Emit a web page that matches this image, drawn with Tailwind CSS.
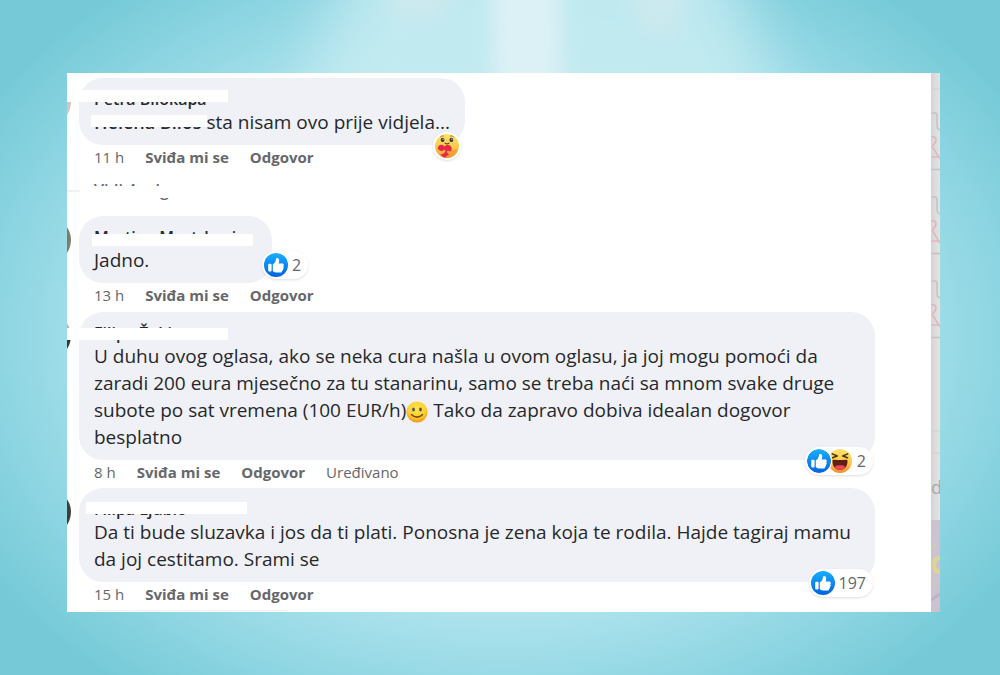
<!DOCTYPE html>
<html lang="hr">
<head>
  <meta charset="UTF-8">
  <meta name="viewport" content="width=device-width, initial-scale=1.0">
  <title>Komentari</title>
  <script src="https://cdn.jsdelivr.net/npm/@tailwindcss/browser@4"></script>
</head>
<body class="relative min-h-screen overflow-x-hidden bg-[#76cad8] bg-[radial-gradient(ellipse_60%_66%_at_50%_50%,#b8e8f0_0%,#b0e4ee_60%,#98dae6_76%,#76cad8_100%)] font-['Open_Sans','Noto_Sans',sans-serif] text-[#26282c]">

  <!-- shared reaction icons -->
  <svg class="absolute size-0" aria-hidden="true">
    <defs>
      <linearGradient id="blue" x1="0" y1="0" x2="0" y2="1">
        <stop offset="0" stop-color="#18afff"/><stop offset="1" stop-color="#0062e0"/>
      </linearGradient>
      <linearGradient id="yellow" x1="0" y1="0" x2="0" y2="1">
        <stop offset="0" stop-color="#ffe368"/><stop offset=".6" stop-color="#fdc848"/><stop offset="1" stop-color="#f28a2d"/>
      </linearGradient>
      <radialGradient id="face" cx=".5" cy=".35" r=".65">
        <stop offset="0" stop-color="#ffe34d"/><stop offset=".65" stop-color="#ffcf2f"/><stop offset="1" stop-color="#f59018"/>
      </radialGradient>
      <symbol id="like" viewBox="0 0 24 24">
        <circle cx="12" cy="12" r="12" fill="url(#blue)"/>
        <rect x="4.2" y="10.8" width="3.4" height="7.6" rx=".9" fill="#fff"/>
        <path d="M8.8 11.6c1.700-1.200 3-2.800 3.100-5 0-1 .5-1.500 1.300-1.500 1.400 0 2 1.300 2 2.600 0 1-.3 1.900-.6 2.700h3.500c1 0 1.700.7 1.700 1.500 0 .6-.3 1.100-.7 1.300.5.300.7.700.7 1.200 0 .7-.4 1.200-1 1.400.2.300.3.500.3.800 0 .7-.5 1.200-1.200 1.300.1.200.1.300.1.500 0 .7-.6 1.100-1.500 1.100h-3.200c-1.800 0-3.200-.3-4.500-1.200z" fill="#fff"/>
      </symbol>
      <symbol id="haha" viewBox="0 0 24 24">
        <circle cx="12" cy="12" r="12" fill="url(#yellow)"/>
        <path d="M4.500 12.200c0-1 .6-1.500 1.700-1.400 3.900.4 7.700.4 11.600 0 1.100-.1 1.700.4 1.700 1.400 0 5-3 8.600-7.500 8.600s-7.500-3.600-7.500-8.600z" fill="#5e2113"/>
        <path d="M6.600 18c1.500-1.700 3.300-2 5.400-1.600 2.100-.4 3.900-.1 5.400 1.600-1.300 1.800-3.200 2.800-5.400 2.800S7.900 19.800 6.600 18z" fill="#f0445c"/>
        <path d="M4.300 4.900l5 2.100-4.800 1.800M19.700 4.900l-5 2.100 4.800 1.800" fill="none" stroke="#4a3418" stroke-width="1.500" stroke-linecap="round" stroke-linejoin="round"/>
      </symbol>
      <symbol id="care" viewBox="0 0 24 24">
        <circle cx="12" cy="12" r="12" fill="url(#yellow)"/>
        <path d="M5.300 2.900c.9-.9 2-1.200 3.300-.9M18.700 2.900c-.9-.9-2-1.200-3.300-.9" fill="none" stroke="#b9711c" stroke-width=".9" stroke-linecap="round"/>
        <ellipse cx="7.600" cy="5.900" rx="1.900" ry="2.100" fill="#2c3340"/><ellipse cx="16.400" cy="5.900" rx="1.900" ry="2.100" fill="#2c3340"/>
        <circle cx="8.100" cy="5.200" r=".6" fill="#fff"/><circle cx="16.900" cy="5.200" r=".6" fill="#fff"/>
        <path d="M10 9.100c1.200.9 2.800.9 4 0" fill="none" stroke="#5b3a1a" stroke-width="1.100" stroke-linecap="round"/>
        <path d="M9.500 23.800c-4-2.800-6.600-5.600-6.700-9.100-.1-3.900 4.600-5.200 6.700-2.100 2.800-3.100 7.700-1.100 7.200 2.700-.5 3.500-3.600 6-7.200 8.500z" fill="#e5294a"/>
        <path d="M.8 14.800c1.400-.3 2.800.4 4.200 1.600 1 .9 2.500.7 3.500-.2 1.200-1 2.600.3 1.700 1.700-1.600 2.400-4.800 2.700-6.700 2.100z" fill="#f7b440"/>
        <path d="M22.800 15.500c-1.700-.7-3.600-.2-5.400 1-1.300.9-2.500 1-3.800.4-1.400-.6-2.300 1-1.200 2 2 1.800 4.700 2.200 7 1.500z" fill="#f3a238"/>
      </symbol>
      <symbol id="smile" viewBox="0 0 24 24">
        <circle cx="12" cy="12" r="11.500" fill="url(#face)"/>
        <ellipse cx="8.200" cy="9.200" rx="1.500" ry="2.200" fill="#4c5360"/><ellipse cx="15.800" cy="9.200" rx="1.500" ry="2.200" fill="#4c5360"/>
        <path d="M6 14.800c3 3.700 9 3.700 12 0" fill="none" stroke="#7a4a12" stroke-width="1.700" stroke-linecap="round"/>
      </symbol>
    </defs>
  </svg>

  <!-- light beams -->
  <svg class="absolute inset-x-0 top-0 h-24 w-full" viewBox="0 0 1000 96" preserveAspectRatio="none" aria-hidden="true">
    <defs>
      <filter id="soft" x="-40%" y="-50%" width="180%" height="200%"><feGaussianBlur stdDeviation="10"/></filter>
      <filter id="wide" x="-30%" y="-60%" width="160%" height="220%"><feGaussianBlur stdDeviation="30"/></filter>
    </defs>
    <path d="M370 -80 H710 L790 140 H290 Z" fill="#c4ebf1" opacity=".9" filter="url(#wide)"/>
    <path d="M385 -30 H455 L440 20 H395 Z M620 -30 H690 L675 35 H645 Z" fill="#d2eaee" opacity=".7" filter="url(#soft)"/>
    <path d="M490 -40 H560 L562 130 H496 Z" fill="#dff2f7" opacity=".9" filter="url(#soft)"/>
  </svg>

  <main class="relative flex pt-[73px] pr-[60px] pb-[63px] pl-[67px]">
    <section class="relative flex-1 overflow-hidden bg-white pt-[5px] pr-14 pl-3">

      <article class="relative">
        <span class="absolute top-[2px] -left-[52px] size-11 rounded-full bg-[#d9c4bb]"></span>
        <div class="relative w-fit rounded-3xl bg-[#f0f1f6] px-[15px] pt-[11px] pb-[9px]">
          <h3 class="h-5 text-[16px] leading-[21px] font-semibold">Petra Bilokapa</h3>
          <p class="text-[19px] leading-[27px]"><a href="#" class="text-[18px] font-semibold">Helena Bilos</a> sta nisam ovo prije vidjela...</p>
          <span class="absolute top-3 -left-3 h-3 w-[161px] bg-white"></span>
          <span class="absolute top-[37px] left-3 h-3 w-[116px] bg-white"></span>
          <span class="absolute right-1 -bottom-[15px] rounded-full bg-white p-[2px] shadow">
            <svg class="size-6"><use href="#care"/></svg>
          </span>
        </div>
        <div class="flex h-6 items-center gap-[21px] pl-[15px] text-[15px] text-[#65676b]">
          <span>11 h</span>
          <button class="font-bold">Sviđa mi se</button>
          <button class="font-bold">Odgovor</button>
        </div>
      </article>

      <div class="relative mt-[9px] h-[38px] pl-[15px]">
        <span class="absolute top-3 -left-3 h-[2px] w-[13px] bg-[#f0f1f6]"></span>
        <p class="text-[16px] leading-6 font-semibold text-[#65676b]">Vidi 4 odg</p>
        <span class="absolute top-2 left-[2px] h-3 w-40 bg-white"></span>
      </div>

      <article class="relative mb-[5px]">
        <span class="absolute top-[2px] -left-[52px] size-11 rounded-full bg-[#807c66]"></span>
        <div class="relative w-[193px] rounded-3xl bg-[#f0f1f6] px-[15px] pt-[11px] pb-[9px]">
          <h3 class="h-5 text-[16px] leading-[21px] font-semibold">Martina Mastrkovic</h3>
          <p class="text-[19px] leading-[27px]">Jadno.</p>
          <span class="absolute top-[18px] left-[13px] h-3 w-[161px] bg-white"></span>
          <span class="absolute top-[35px] left-[183px] flex items-center gap-1 rounded-full bg-white p-[2px] pr-[7px] text-[16px] leading-6 text-[#65676b] shadow">
            <svg class="size-6"><use href="#like"/></svg>2
          </span>
        </div>
        <div class="flex h-6 items-center gap-[21px] pl-[15px] text-[15px] text-[#65676b]">
          <span>13 h</span>
          <button class="font-bold">Sviđa mi se</button>
          <button class="font-bold">Odgovor</button>
        </div>
      </article>

      <article class="relative mb-1">
        <span class="absolute top-[2px] -left-[52px] size-11 rounded-full bg-linear-to-b from-[#e0a989] from-50% to-[#3b3138] to-60%"></span>
        <div class="relative rounded-3xl bg-[#f0f1f6] px-[15px] pt-[11px] pb-[9px]">
          <h3 class="h-5 text-[16px] leading-[21px] font-semibold">Filipa Žokic</h3>
          <p class="text-[19px] leading-[27px]">U duhu ovog oglasa, ako se neka cura našla u ovom oglasu, ja joj mogu pomoći da zaradi 200 eura mjesečno za tu stanarinu, samo se treba naći sa mnom svake druge subote po sat vremena (100 EUR/h)<svg class="inline size-[22px]"><use href="#smile"/></svg> Tako da zapravo dobiva idealan dogovor besplatno</p>
          <span class="absolute top-4 -left-3 h-3 w-[161px] bg-white"></span>
          <span class="absolute right-[2px] -bottom-[15px] flex items-center rounded-full bg-white p-[2px] pr-[7px] text-[16px] leading-6 text-[#65676b] shadow">
            <svg class="relative z-10 size-6 rounded-full ring-1 ring-white"><use href="#like"/></svg>
            <svg class="-ml-[3px] size-6"><use href="#haha"/></svg>
            <span class="pl-[5px]">2</span>
          </span>
        </div>
        <div class="flex h-6 items-center gap-[21px] pl-[15px] text-[15px] text-[#65676b]">
          <span>8 h</span>
          <button class="font-bold">Sviđa mi se</button>
          <button class="font-bold">Odgovor</button>
          <span>Uređivano</span>
        </div>
      </article>

      <article class="relative">
        <span class="absolute top-[2px] -left-[52px] size-11 rounded-full bg-[#3d3f36]"></span>
        <div class="relative rounded-3xl bg-[#f0f1f6] px-[15px] pt-[11px] pb-[9px]">
          <h3 class="h-5 text-[16px] leading-[21px] font-semibold">Filipa Ljubic</h3>
          <p class="text-[19px] leading-[27px]">Da ti bude sluzavka i jos da ti plati. Ponosna je zena koja te rodila. Hajde tagiraj mamu da joj cestitamo. Srami se</p>
          <span class="absolute top-[14px] left-[7px] h-3 w-[161px] bg-white"></span>
          <span class="absolute right-[2px] -bottom-[15px] flex items-center gap-1 rounded-full bg-white p-[2px] pr-[7px] text-[16px] leading-6 text-[#65676b] shadow">
            <svg class="size-6"><use href="#like"/></svg>197
          </span>
        </div>
        <div class="flex h-6 items-center gap-[21px] pl-[15px] text-[15px] text-[#65676b]">
          <span>15 h</span>
          <button class="font-bold">Sviđa mi se</button>
          <button class="font-bold">Odgovor</button>
        </div>
      </article>

      <!-- top edge of the next comment -->
      <div class="mt-1 ml-4 h-px w-48 bg-[#f0f1f6]"></div>
    </section>

    <!-- dimmed page behind the dialog -->
    <aside class="flex w-[9px] flex-col overflow-hidden bg-linear-to-r from-[#d4d4d4] to-[#e4e4e4]">
      <svg class="h-[400px] w-[9px] shrink-0" viewBox="0 0 9 400" fill="none" aria-hidden="true">
        <defs>
          <g id="knot">
            <path d="M0 0h4q2 0 2 3v9q0 4 3 5" stroke="#c3c3c3" stroke-width="1.500"/>
            <path d="M0 24q5-1 5 3 0 3-3 5-1 2 1 4l6 10M0 44h7" stroke="#e3b5bb" stroke-width="1.500"/>
            <path d="M0 56.500h9" stroke="#c3c3c3" stroke-width="1.500"/>
          </g>
        </defs>
        <path d="M0 16h9M0 358h9M0 380h9" stroke="#d0d0d0"/>
        <use href="#knot" y="40"/>
        <use href="#knot" y="124"/>
        <use href="#knot" y="208"/>
      </svg>
      <span class="text-[18px] leading-7 text-[#a8a8a8]">d</span>
      <svg class="mt-[19px] w-[9px] flex-1 bg-[#cdc2d0]" viewBox="0 0 9 92" preserveAspectRatio="none" fill="none" aria-hidden="true">
        <path d="M1 28l5-5M2 62l3 3" stroke="#d6cf9f" stroke-width="1.500"/>
        <path d="M9 38q-6 0-6 7t6 7" stroke="#dfd591" stroke-width="4"/>
        <path d="M0 80l9-6" stroke="#c1b1c8" stroke-width="3"/>
      </svg>
    </aside>
  </main>
</body>
</html>
